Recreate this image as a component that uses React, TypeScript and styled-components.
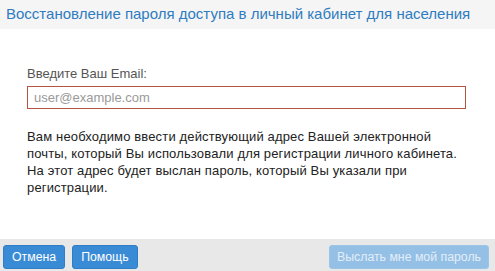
import React from "react";
import styled, { createGlobalStyle } from "styled-components";

const GlobalStyle = createGlobalStyle`
  html, body {
    margin: 0;
    padding: 0;
    background: #ffffff;
    font-family: "Liberation Sans", Arial, sans-serif;
  }
`;

const Page = styled.div`
  height: 100vh;
  display: flex;
  flex-direction: column;
`;

const Header = styled.div`
  height: 29px;
  flex: none;
  display: flex;
  align-items: center;
  padding: 0 6px;
  background: #f5f5f5;
  > h1 {
    margin: 0;
    font-size: 15px;
    font-weight: 400;
    color: #2f7cc0;
    line-height: 20px;
    padding-bottom: 2px;
    white-space: nowrap;
  }
`;

const Body = styled.div`
  flex: 1;
  padding: 37px 30px 0 27px;
`;

const Label = styled.label`
  display: block;
  font-size: 13px;
  line-height: 15px;
  color: #555555;
  margin-bottom: 5px;
`;

const EmailInput = styled.input`
  display: block;
  box-sizing: border-box;
  width: 439px;
  height: 23px;
  margin: 0;
  padding: 0 6px;
  border: 1px solid #b4553f;
  font-family: "Liberation Sans", Arial, sans-serif;
  font-size: 13px;
  color: #333333;
  outline: none;
  &::placeholder {
    color: #9a9a9a;
  }
`;

const Note = styled.p`
  margin: 19px 0 0;
  font-size: 13px;
  line-height: 17px;
  letter-spacing: 0.15px;
  color: #222222;
  width: 440px;
`;

const Footer = styled.div`
  height: 32px;
  flex: none;
  box-sizing: border-box;
  display: flex;
  align-items: flex-start;
  gap: 7px;
  padding: 6px 6px 0 3px;
  background: #e8e8e8;
`;

const Button = styled.button<{ $primary?: boolean; $push?: boolean }>`
  height: 24px;
  box-sizing: border-box;
  padding: 0 ${({ $primary }) => ($primary ? "7px" : "8px")};
  margin-left: ${({ $push }) => ($push ? "auto" : "0")};
  border: 1px solid ${({ $primary }) => ($primary ? "#9cc4e6" : "#2f7dc4")};
  border-radius: 3px;
  background: ${({ $primary }) => ($primary ? "#94c0e6" : "#3a8bd6")};
  color: ${({ $primary }) => ($primary ? "#e3eef8" : "#ffffff")};
  font-family: "Liberation Sans", Arial, sans-serif;
  font-size: 12.3px;
  line-height: 22px;
  cursor: pointer;
`;

export default function App() {
  return (
    <Page>
      <GlobalStyle />
      <Header>
        <h1>Восстановление пароля доступа в личный кабинет для населения</h1>
      </Header>
      <Body>
        <Label htmlFor="email">Введите Ваш Email:</Label>
        <EmailInput id="email" type="text" placeholder="user@example.com" />
        <Note>
          Вам необходимо ввести действующий адрес Вашей электронной почты,
          который Вы использовали для регистрации личного кабинета. На этот
          адрес будет выслан пароль, который Вы указали при регистрации.
        </Note>
      </Body>
      <Footer>
        <Button>Отмена</Button>
        <Button>Помощь</Button>
        <Button $primary $push disabled>
          Выслать мне мой пароль
        </Button>
      </Footer>
    </Page>
  );
}
